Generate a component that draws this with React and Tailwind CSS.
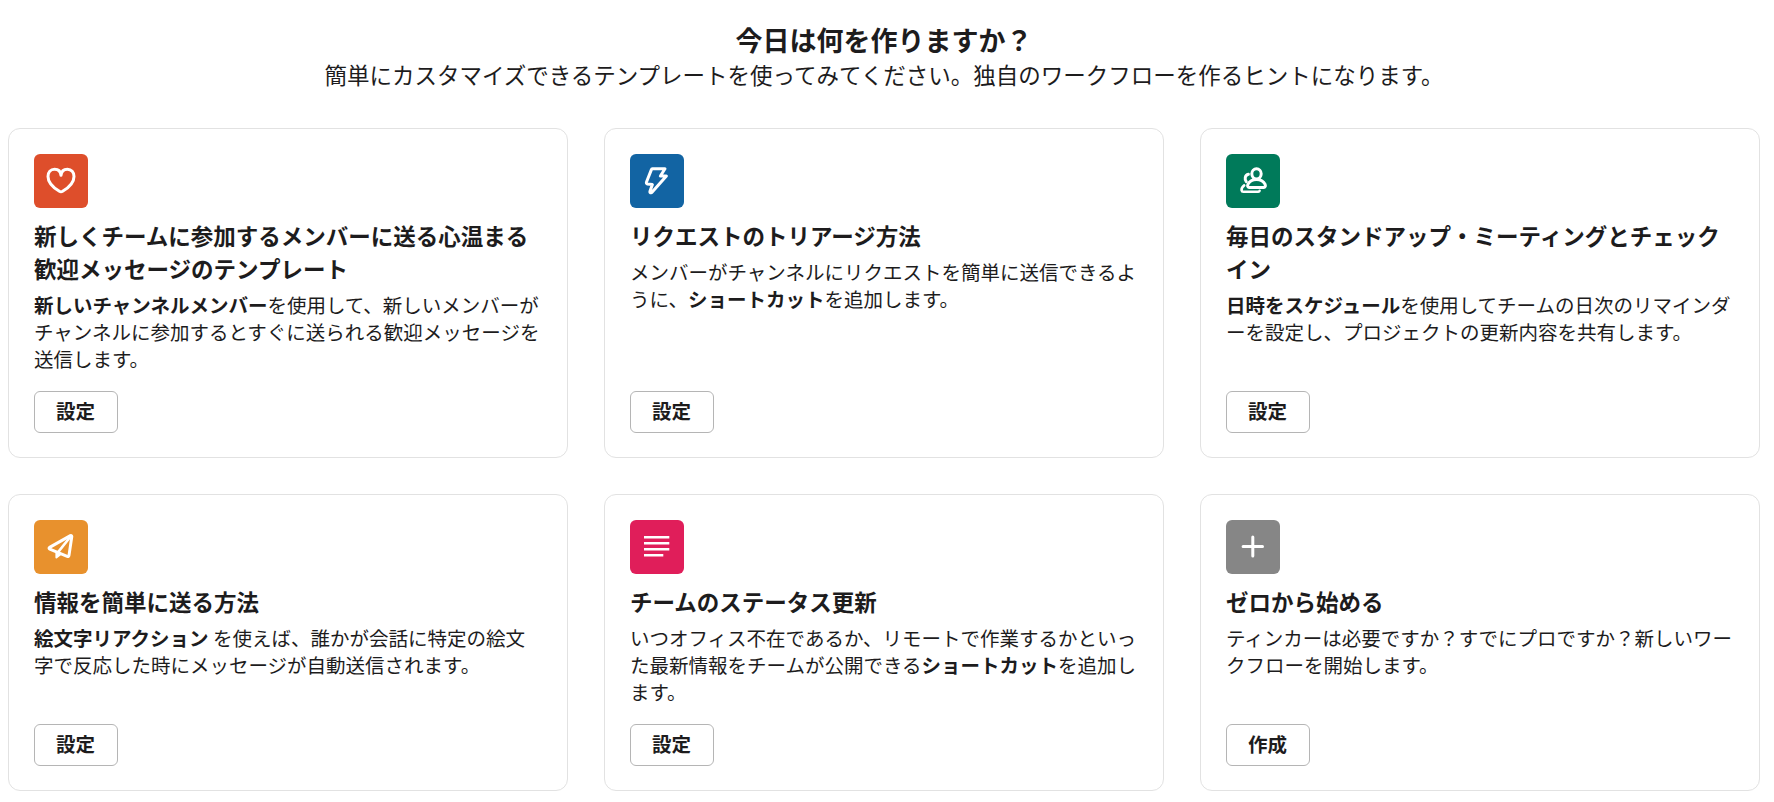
const HeartIcon = () => (
	<path d="M27 21.3C26.6 17.3 24 15.2 20.6 15.2C16.6 15.2 14 18.4 14 22.4C14 28.6 20 34 25.4 37.3Q27 38.2 28.6 37.3C34 34 40 28.6 40 22.4C40 18.4 37.4 15.2 33.4 15.2C30 15.2 27.4 17.3 27 21.3Z" />
);

const BoltIcon = () => (
	<path d="M22.4 14.8H35L30.4 22H36.4L21.8 38.4Q19.6 39.6 19.9 37.4L22.4 30.6L17.4 30Q15.9 29.6 16.6 27.8L21.4 15.6Q21.6 14.8 22.4 14.8Z" />
);

const PeopleIcon = () => (
	<>
		<ellipse cx="30.5" cy="19.8" rx="4.7" ry="5.1" />
		<path d="M23 33.4H38C39.4 33.4 39.7 31.8 39 30.2C37.6 27.2 34.6 25.4 30.5 25.4S23.4 27.2 22 30.2C21.3 31.8 21.6 33.4 23 33.4Z" />
		<path d="M22.4 20.2C18.6 21 18.6 25.8 20.2 27.6" />
		<path strokeWidth="2.6" d="M18.2 31.4C16 33 15.4 35 15.6 36.4Q15.8 37.8 17.4 37.8H32.2Q33.4 37.8 33.6 36.8" />
	</>
);

const PlaneIcon = () => (
	<>
		<path d="M36.4 15.6L15.6 27.4Q14.4 28.4 15.8 29.2L33.2 36.4Q34.8 37 35 35.4L37.8 16.6Q37.8 15.2 36.4 15.6Z" />
		<path strokeWidth="2.7" d="M37 16L24.2 32" />
		<path strokeWidth="2" fill="white" d="M22.4 32.2V37.4L26.8 34Z" />
	</>
);

const LinesIcon = () => (
	<path strokeWidth="2.4" strokeLinecap="butt" d="M14 17.3H39.3M14 23.3H39.3M14 29.3H39.3M14 35.3H33.3" />
);

const PlusIcon = () => <path d="M26.8 16.9V36.1M17.1 26.6H36.5" />;

const templates = [
	{
		icon: HeartIcon,
		color: "bg-[#de4e2b]",
		title: "新しくチームに参加するメンバーに送る心温まる歓迎メッセージのテンプレート",
		body: (
			<>
				<b>新しいチャンネルメンバー</b>を使用して、新しいメンバーがチャンネルに参加するとすぐに送られる歓迎メッセージを送信します。
			</>
		),
		action: "設定",
	},
	{
		icon: BoltIcon,
		color: "bg-[#1264a3]",
		title: "リクエストのトリアージ方法",
		body: (
			<>
				メンバーがチャンネルにリクエストを簡単に送信できるように、<b>ショートカット</b>を追加します。
			</>
		),
		action: "設定",
	},
	{
		icon: PeopleIcon,
		color: "bg-[#007a5a]",
		title: "毎日のスタンドアップ・ミーティングとチェックイン",
		body: (
			<>
				<b>日時をスケジュール</b>を使用してチームの日次のリマインダーを設定し、プロジェクトの更新内容を共有します。
			</>
		),
		action: "設定",
	},
	{
		icon: PlaneIcon,
		color: "bg-[#e8912d]",
		title: "情報を簡単に送る方法",
		body: (
			<>
				<b>絵文字リアクション</b> を使えば、誰かが会話に特定の絵文字で反応した時にメッセージが自動送信されます。
			</>
		),
		action: "設定",
	},
	{
		icon: LinesIcon,
		color: "bg-[#e01e5a]",
		title: "チームのステータス更新",
		body: (
			<>
				いつオフィス不在であるか、リモートで作業するかといった最新情報をチームが公開できる<b>ショートカット</b>を追加します。
			</>
		),
		action: "設定",
	},
	{
		icon: PlusIcon,
		color: "bg-[#868686]",
		title: "ゼロから始める",
		body: "ティンカーは必要ですか？すでにプロですか？新しいワークフローを開始します。",
		action: "作成",
	},
];

function TemplateCard({ icon: Icon, color, title, body, action }) {
	return (
		<div className="flex flex-col items-start rounded-xl border border-[#e2e2e2] px-[25px] pt-[25px] pb-6">
			<div className={`size-[54px] rounded-md ${color}`}>
				<svg
					viewBox="0 0 54 54"
					className="size-full"
					fill="none"
					stroke="white"
					strokeWidth="3"
					strokeLinecap="round"
					strokeLinejoin="round"
				>
					<Icon />
				</svg>
			</div>
			<h2 className="mt-[11px] text-[22.5px] leading-[33px] font-bold">{title}</h2>
			<p className="mt-1.5 mb-[19px] text-[19.5px] leading-[27px]">{body}</p>
			<button className="mt-auto h-[42px] w-[84px] rounded-md border border-[#b5b5b5] pr-px pb-0.5 text-[19.5px] leading-none font-bold">
				{action}
			</button>
		</div>
	);
}

export default function App() {
	return (
		<main
			lang="ja"
			className="min-h-screen bg-white pt-[23px] pr-3.5 pl-2 font-['Noto_Sans_CJK_JP',sans-serif] text-[#1d1c1d]"
		>
			<header className="text-center">
				<h1 className="text-[27px] leading-[34px] font-bold">今日は何を作りますか？</h1>
				<p className="text-[22.5px] leading-[34px]">
					簡単にカスタマイズできるテンプレートを使ってみてください。独自のワークフローを作るヒントになります。
				</p>
			</header>

			<section className="mt-[37px] grid grid-cols-3 gap-9">
				{templates.map((template) => (
					<TemplateCard key={template.title} {...template} />
				))}
			</section>
		</main>
	);
}
